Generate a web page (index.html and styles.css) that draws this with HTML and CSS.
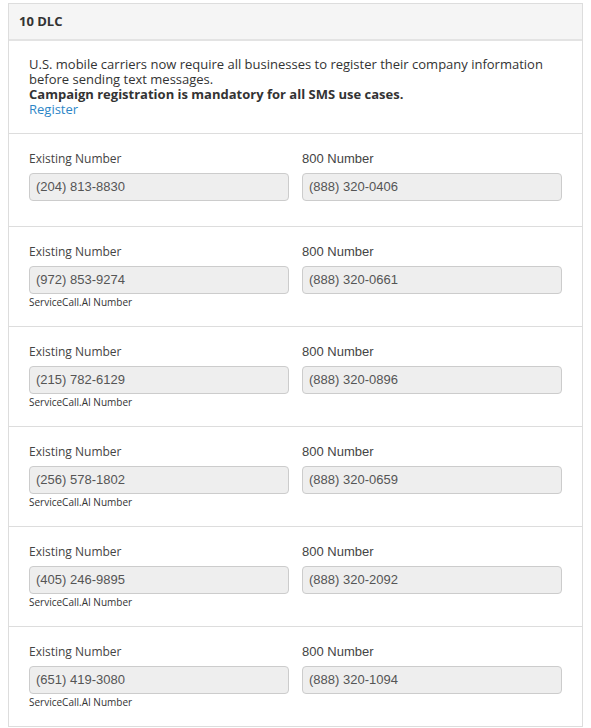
FILE: index.html
```html
<!DOCTYPE html>
<html>
<head>
<meta charset="utf-8">
<link rel="stylesheet" href="styles.css">
</head>
<body>
<div class="panel">
  <div class="panel-heading">10 DLC</div>
  <div class="intro">
    <p class="intro-line">U.S. mobile carriers now require all businesses to register their company information before sending text messages.</p>
    <p class="intro-line intro-line--strong">Campaign registration is mandatory for all SMS use cases.</p>
    <p class="intro-line"><a href="#" class="link">Register</a></p>
  </div>
  <div class="row row--nohelp">
    <div class="field">
      <label class="label label--os">Existing Number</label>
      <div class="input">(204) 813-8830</div>
    </div>
    <div class="field">
      <label class="label">800 Number</label>
      <div class="input">(888) 320-0406</div>
    </div>
  </div>
  <div class="row">
    <div class="field">
      <label class="label label--os">Existing Number</label>
      <div class="input">(972) 853-9274</div>
      <div class="help">ServiceCall.AI Number</div>
    </div>
    <div class="field">
      <label class="label">800 Number</label>
      <div class="input">(888) 320-0661</div>
    </div>
  </div>
  <div class="row">
    <div class="field">
      <label class="label label--os">Existing Number</label>
      <div class="input">(215) 782-6129</div>
      <div class="help">ServiceCall.AI Number</div>
    </div>
    <div class="field">
      <label class="label">800 Number</label>
      <div class="input">(888) 320-0896</div>
    </div>
  </div>
  <div class="row">
    <div class="field">
      <label class="label label--os">Existing Number</label>
      <div class="input">(256) 578-1802</div>
      <div class="help">ServiceCall.AI Number</div>
    </div>
    <div class="field">
      <label class="label">800 Number</label>
      <div class="input">(888) 320-0659</div>
    </div>
  </div>
  <div class="row">
    <div class="field">
      <label class="label label--os">Existing Number</label>
      <div class="input">(405) 246-9895</div>
      <div class="help">ServiceCall.AI Number</div>
    </div>
    <div class="field">
      <label class="label">800 Number</label>
      <div class="input">(888) 320-2092</div>
    </div>
  </div>
  <div class="row">
    <div class="field">
      <label class="label label--os">Existing Number</label>
      <div class="input">(651) 419-3080</div>
      <div class="help">ServiceCall.AI Number</div>
    </div>
    <div class="field">
      <label class="label">800 Number</label>
      <div class="input">(888) 320-1094</div>
    </div>
  </div>
</div>
<div class="panel-under"></div>
</body>
</html>
```
FILE: styles.css
```css
html, body {
  margin: 0;
  padding: 0;
  background: #ffffff;
}
body {
  padding: 3px 8px 0 8px;
  width: 575px;
  font-family: "Open Sans", "Liberation Sans", sans-serif;
  color: #333;
}
.panel {
  border: 1px solid #dddddd;
  background: #fff;
}
.panel-heading {
  background: #f5f5f5;
  border-bottom: 2px solid #e3e3e3;
  height: 35px;
  line-height: 35px;
  padding: 0 10px;
  font-size: 13px;
  font-weight: 700;
  color: #333;
}
.intro {
  padding: 16px 20px 16px 20px;
  border-bottom: 1px solid #dddddd;
}
.intro-line {
  margin: 0;
  font-size: 13px;
  line-height: 15px;
  color: #333;
}
.intro-line--strong {
  font-weight: 700;
}
.link {
  color: #2d86c7;
  text-decoration: none;
}
.row {
  display: grid;
  grid-template-columns: 1fr 1fr;
  column-gap: 13px;
  padding: 16px 20px 18px 20px;
  border-bottom: 1px solid #dddddd;
}
.row:last-child {
  border-bottom: none;
}
.row--nohelp {
  padding-bottom: 25px;
}
.field {
  display: flex;
  flex-direction: column;
}
.label {
  display: block;
  font-family: "Liberation Sans", Arial, sans-serif;
  font-size: 13px;
  line-height: 18px;
  color: #444;
  margin-bottom: 5px;
}
.label--os {
  font-family: "Open Sans", "Liberation Sans", sans-serif;
  font-size: 12px;
}
.input {
  box-sizing: border-box;
  height: 28px;
  line-height: 26px;
  padding: 0 6px;
  border: 1px solid #cccccc;
  border-radius: 4px;
  background: #eeeeee;
  font-family: "Liberation Sans", Arial, sans-serif;
  font-size: 13px;
  color: #555;
}
.help {
  margin-top: 2px;
  font-size: 10px;
  line-height: 12px;
  color: #333;
}
.panel-under {
  margin: 0 3px;
  height: 1px;
  border-bottom: 1px solid #dddddd;
}
```
